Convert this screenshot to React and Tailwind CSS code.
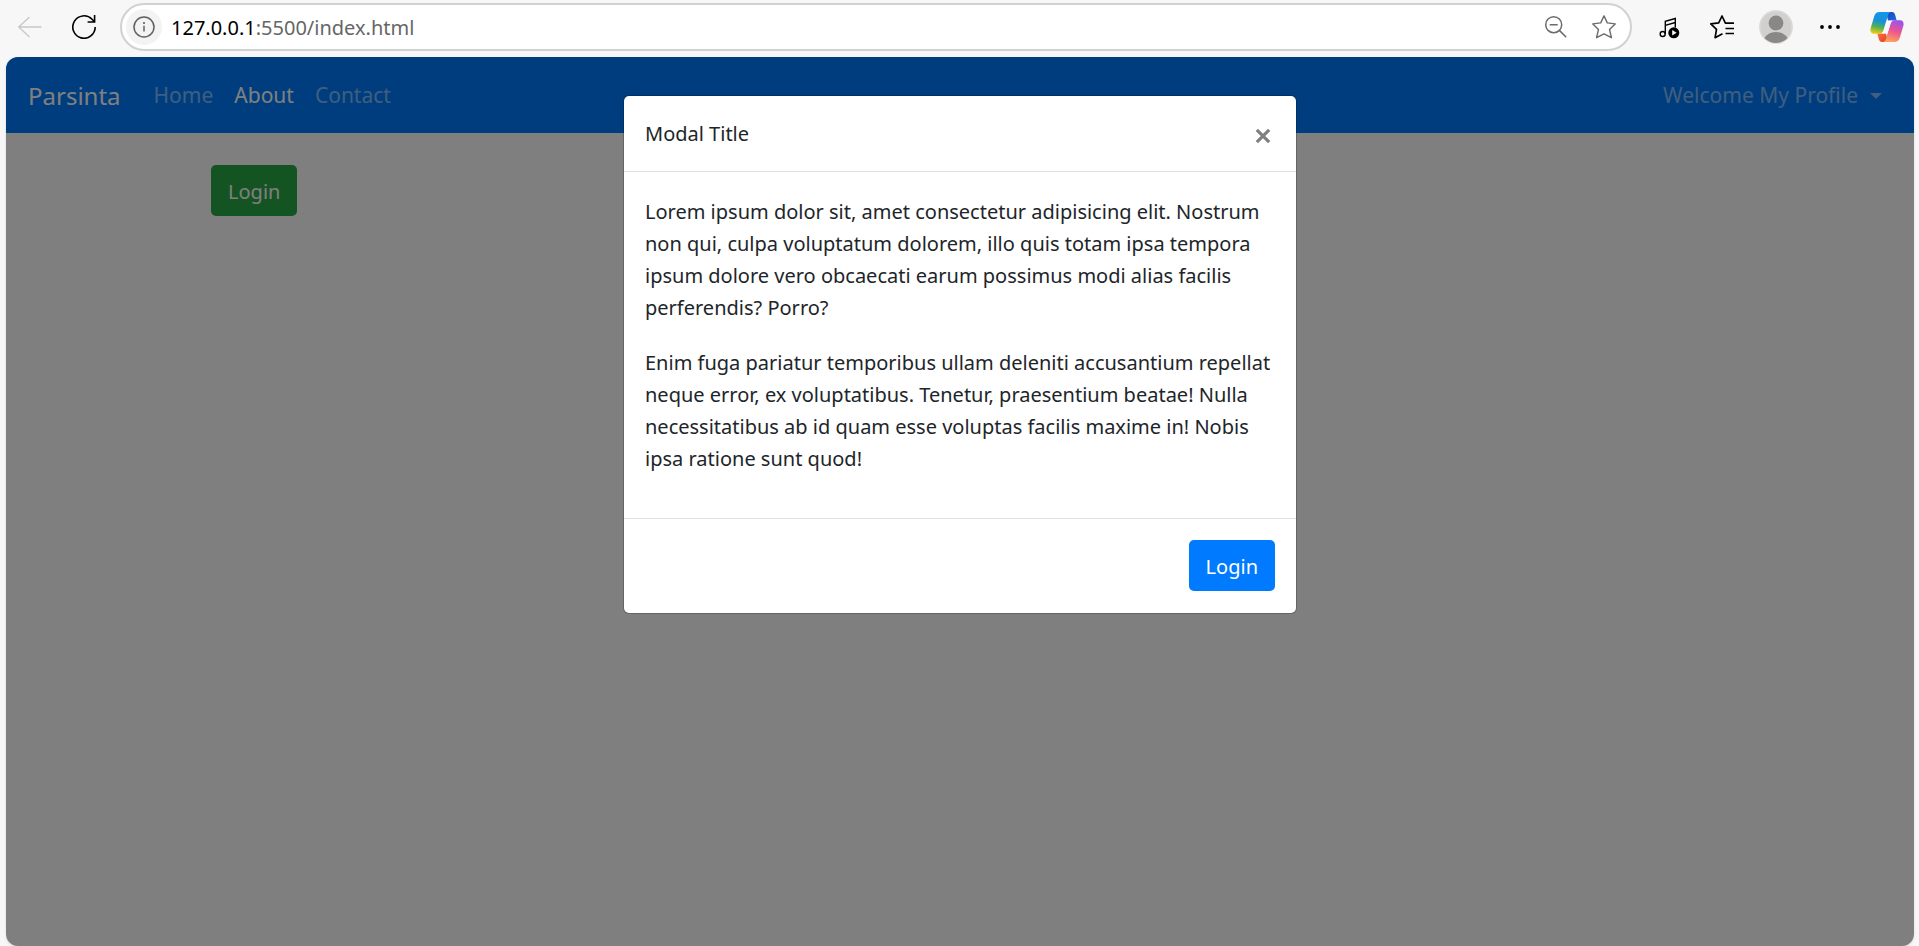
import React, { useState } from 'react';

const PARAGRAPHS = [
  'Lorem ipsum dolor sit, amet consectetur adipisicing elit. Nostrum non qui, culpa voluptatum dolorem, illo quis totam ipsa tempora ipsum dolore vero obcaecati earum possimus modi alias facilis perferendis? Porro?',
  'Enim fuga pariatur temporibus ullam deleniti accusantium repellat neque error, ex voluptatibus. Tenetur, praesentium beatae! Nulla necessitatibus ab id quam esse voluptas facilis maxime in! Nobis ipsa ratione sunt quod!',
];

function BackIcon() {
  return (
    <svg viewBox="0 0 24 24" className="h-6 w-6" fill="none" stroke="currentColor" strokeWidth="1.3" aria-hidden="true">
      <path d="M23.5 12H.8M11.5 2 .8 12l10.7 10" />
    </svg>
  );
}

function ReloadIcon() {
  return (
    <svg viewBox="0 0 24 24" className="h-6 w-6" fill="none" stroke="currentColor" strokeWidth="1.6" aria-hidden="true">
      <path d="M23.2 12a11.2 11.2 0 1 1-3.2-7.8l2.6 2.6M22.6 0v7h-7" />
    </svg>
  );
}

function InfoIcon() {
  return (
    <svg viewBox="0 0 24 24" className="h-6 w-6" fill="none" stroke="currentColor" strokeWidth="1.5" aria-hidden="true">
      <circle cx="12" cy="12" r="10" />
      <path d="M12 10.8v5.6" />
      <circle cx="12" cy="8" r="1.1" fill="currentColor" stroke="none" />
    </svg>
  );
}

function ZoomOutIcon() {
  return (
    <svg viewBox="0 0 24 24" className="h-6 w-6" fill="none" stroke="currentColor" strokeWidth="1.5" aria-hidden="true">
      <circle cx="9.7" cy="9.7" r="8" />
      <path d="m15.4 15.4 6.8 6.8M5.7 9.7h8" />
    </svg>
  );
}

function StarIcon() {
  return (
    <svg viewBox="0 0 24 24" className="h-6 w-6" fill="none" stroke="currentColor" strokeWidth="1.4" strokeLinejoin="round" aria-hidden="true">
      <path d="m12 .9 3.3 7 7.9 1-5.7 5.5 1.9 8.3-7.4-3.9-7.4 3.9 1.9-8.3L.8 8.9l7.9-1z" />
    </svg>
  );
}

function MusicIcon() {
  return (
    <svg viewBox="0 0 24 24" className="h-6 w-6" fill="none" stroke="currentColor" strokeWidth="1.4" aria-hidden="true">
      <circle cx="4.7" cy="19" r="2.5" />
      <path d="M7.3 19V6.3l10-2.8v9M7.3 10.3l10-2.8" />
      <circle cx="15.8" cy="17.8" r="5.5" fill="currentColor" stroke="none" />
      <path d="m14.2 15.1 4.400 2.700-4.400 2.700z" fill="#f7f7f7" stroke="none" />
    </svg>
  );
}

function FavoritesIcon() {
  return (
    <svg viewBox="0 0 24 24" className="h-6 w-6" fill="none" stroke="currentColor" strokeWidth="1.7" strokeLinejoin="round" aria-hidden="true">
      <path d="M24 8.1h-8.600L12 1 8.700 7.900l-7.900 1 5.700 5.500-1.400 8.300 7.400-4M15.500 13.500H24M15.500 18.500H24" />
    </svg>
  );
}

function AvatarIcon() {
  return (
    <svg viewBox="0 0 34 34" className="h-[34px] w-[34px]" aria-hidden="true">
      <defs>
        <clipPath id="avatar-clip">
          <circle cx="17" cy="17" r="16" />
        </clipPath>
      </defs>
      <circle cx="17" cy="17" r="17" fill="#dcdbd9" />
      <circle cx="17" cy="17" r="15.5" fill="#d2d0ce" />
      <circle cx="17" cy="13" r="7.4" fill="#8a8886" />
      <ellipse cx="17" cy="33" rx="13" ry="11" fill="#8a8886" clipPath="url(#avatar-clip)" />
    </svg>
  );
}

function MoreIcon() {
  return (
    <svg viewBox="0 0 24 24" className="h-6 w-6" fill="currentColor" aria-hidden="true">
      <circle cx="4" cy="12" r="1.9" />
      <circle cx="12" cy="12" r="1.9" />
      <circle cx="20" cy="12" r="1.9" />
    </svg>
  );
}

function CopilotIcon() {
  return (
    <svg viewBox="0 0 34 32" className="h-8 w-[34px]" aria-hidden="true">
      <defs>
        <linearGradient id="cp-left" x1="0.5" y1="0" x2="0.3" y2="1">
          <stop offset="0" stopColor="#1296ec" />
          <stop offset="0.4" stopColor="#1a8fd8" />
          <stop offset="0.68" stopColor="#4bb15a" />
          <stop offset="1" stopColor="#f4cb10" />
        </linearGradient>
        <linearGradient id="cp-right" x1="0.7" y1="0" x2="0.4" y2="1">
          <stop offset="0" stopColor="#9a52f2" />
          <stop offset="0.5" stopColor="#ec5590" />
          <stop offset="1" stopColor="#ffa35a" />
        </linearGradient>
        <linearGradient id="cp-top" x1="0" y1="0" x2="1" y2="1">
          <stop offset="0" stopColor="#1744b8" />
          <stop offset="1" stopColor="#1e6be8" />
        </linearGradient>
        <linearGradient id="cp-bottom" x1="0" y1="0" x2="1" y2="1">
          <stop offset="0" stopColor="#f8743a" />
          <stop offset="1" stopColor="#e53a2c" />
        </linearGradient>
      </defs>
      <path d="M16 1h6c2 0 2.700 1.300 3.300 3.500L26.700 9.500H18z" fill="url(#cp-top)" />
      <path d="M18 31h-6c-2 0-2.700-1.300-3.300-3.500L7.300 22.500H16z" fill="url(#cp-bottom)" />
      <path d="M9.500 1H21c-2 .6-2.700 2-3.400 4.500l-3.900 13c-.9 3-2.300 4.300-5 4.300H3.800C1 22.800-.2 20.500.7 17L4.300 5C5.200 2.200 6.800 1 9.500 1z" fill="url(#cp-left)" />
      <path d="M24.500 31H13c2-.6 2.700-2 3.400-4.500l3.900-13c.9-3 2.300-4.300 5-4.300h4.900c2.800 0 4 2.300 3.100 5.800L29.700 27c-.9 2.800-2.500 4-5.200 4z" fill="url(#cp-right)" />
      <path d="M18.500 9.800h4c-1.300.8-1.800 2-2.300 3.700l-1.700 5.600c-.7 2.300-1.500 3.300-3.400 3.300h-3.200c1-.8 1.500-1.800 2-3.500l2-6.500c.6-1.900 1.200-2.600 2.600-2.600z" fill="#f9f7f8" />
    </svg>
  );
}

function Toolbar() {
  return (
    <header className="flex h-[57px] shrink-0 items-center pr-[15px] pb-[3px] pl-[18px] text-black">
      <button type="button" aria-label="Back" className="text-[#c8c8c8]">
        <BackIcon />
      </button>
      <button type="button" aria-label="Reload" className="ml-[30px]">
        <ReloadIcon />
      </button>
      <div className="ml-6 flex h-12 flex-1 items-center rounded-full border-2 border-[#d1d1d1] bg-white pr-[14px] pl-1">
        <button type="button" aria-label="View site information" className="flex h-9 w-9 items-center justify-center rounded-full bg-[#f3f3f3] text-[#606060]">
          <InfoIcon />
        </button>
        <p className="ml-[9px] flex-1 pt-px text-xl text-[#666666]">
          <span className="text-black">127.0.0.1</span>:5500/index.html
        </p>
        <div className="flex items-center gap-6 text-[#6b6b6b]">
          <button type="button" aria-label="Zoom out">
            <ZoomOutIcon />
          </button>
          <button type="button" aria-label="Add to favorites">
            <StarIcon />
          </button>
        </div>
      </div>
      <div className="ml-[26px] flex items-center">
        <button type="button" aria-label="Media">
          <MusicIcon />
        </button>
        <button type="button" aria-label="Favorites" className="ml-7">
          <FavoritesIcon />
        </button>
        <button type="button" aria-label="Profile" className="ml-[25px]">
          <AvatarIcon />
        </button>
        <button type="button" aria-label="More" className="ml-[25px]">
          <MoreIcon />
        </button>
        <button type="button" aria-label="Copilot" className="ml-7">
          <CopilotIcon />
        </button>
      </div>
    </header>
  );
}

function Navbar() {
  return (
    <nav className="flex h-[76px] items-center bg-[#007bff] px-[22px] pt-[2px] text-[21px]">
      <a href="#" className="text-2xl text-white">Parsinta</a>
      <div className="ml-[33px] flex flex-1 items-center gap-[21px] text-white/50">
        <a href="#">Home</a>
        <a href="#" className="text-white">About</a>
        <a href="#">Contact</a>
      </div>
      <button type="button" className="flex items-center gap-3 pr-[10px] text-white/50">
        Welcome My Profile
        <svg viewBox="0 0 12 6" className="h-[6px] w-3" fill="currentColor" aria-hidden="true">
          <path d="M0 0h12L6 6z" />
        </svg>
      </button>
    </nav>
  );
}

function Modal({ onClose }) {
  return (
    <div className="absolute inset-0 flex items-start justify-center bg-black/50 pt-[38px]">
      <section role="dialog" aria-labelledby="modal-title" className="w-[674px] rounded-md border border-black/20 bg-white bg-clip-padding text-[#212529]">
        <div className="flex items-center justify-between border-b border-[#dee2e6] px-[21px] pt-[22px] pb-[21px]">
          <h5 id="modal-title" className="leading-8">Modal Title</h5>
          <button type="button" aria-label="Close" onClick={onClose} className="mr-1 pt-1 text-[#808080]">
            <svg viewBox="0 0 16 16" className="h-4 w-4" fill="none" stroke="currentColor" strokeWidth="3.2" aria-hidden="true">
              <path d="m1.8 1.8 12.4 12.4M14.2 1.8 1.8 14.2" />
            </svg>
          </button>
        </div>
        <div className="px-[21px] pt-6 pb-5">
          {PARAGRAPHS.map((text) => (
            <p key={text} className="mb-[23px] leading-8">{text}</p>
          ))}
        </div>
        <div className="flex justify-end border-t border-[#dee2e6] px-[21px] pt-[21px] pb-[22px]">
          <button type="button" className="rounded-[5px] bg-[#007bff] px-[17px] pt-[10px] pb-2 leading-[33px] text-white">Login</button>
        </div>
      </section>
    </div>
  );
}

export default function App() {
  const [open, setOpen] = useState(true);
  return (
    <div className="flex h-screen flex-col bg-[#f7f7f7] font-['Noto_Sans',sans-serif] text-xl">
      <Toolbar />
      <div className="relative mr-[5px] ml-[6px] flex-1 overflow-hidden rounded-xl bg-white shadow-sm">
        <Navbar />
        <main className="px-[205px] pt-8">
          <button type="button" onClick={() => setOpen(true)} className="rounded-[5px] bg-[#28a745] px-[17px] pt-[10px] pb-2 leading-[33px] text-white">Login</button>
        </main>
        {open && <Modal onClose={() => setOpen(false)} />}
      </div>
    </div>
  );
}
